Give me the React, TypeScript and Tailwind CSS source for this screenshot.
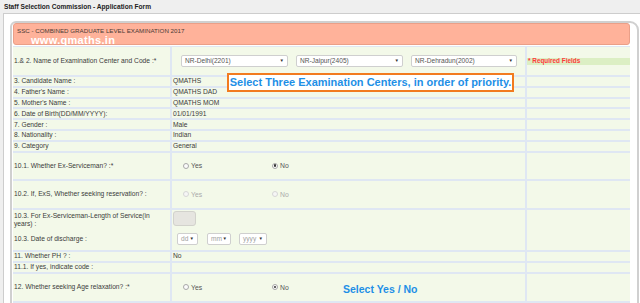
import React from 'react'

const label = "text-[6.7px] leading-[8px] text-[#3b3b3b] px-[1px]"

function Row({ h, left, mid, right, align = 'center' }: { h: string, left: React.ReactNode, mid?: React.ReactNode, right?: React.ReactNode, align?: 'center' | 'start' }) {
    return (
        <div className={`grid grid-cols-[157px_353px_103px] gap-x-[2px] ${h}`}>
            <div className={`bg-[#f3f9e9] flex ${align === 'center' ? 'items-center' : 'items-start pt-[2px]'} ${label}`}>{left}</div>
            <div className={`bg-[#f3f9e9] flex items-center ${label}`}>{mid}</div>
            <div className="bg-[#f3f9e9] flex items-center">{right}</div>
        </div>
    )
}

function Select({ text, w, muted }: { text: string, w: string, muted?: boolean }) {
    return (
        <div className={`${w} h-[12px] bg-white border border-[#cfcfcf] rounded-[2px] flex items-center justify-between px-[3px] text-[6.6px] ${muted ? 'text-[#a0a0a0]' : 'text-[#555]'}`}>
            <span>{text}</span>
            <span className="text-[4.5px] text-[#333]">▼</span>
        </div>
    )
}

function Radio({ text, checked, disabled }: { text: string, checked?: boolean, disabled?: boolean }) {
    return (
        <div className={`flex items-center gap-[2px] text-[6.8px] ${disabled ? 'text-[#aaa]' : 'text-[#555]'}`}>
            <span className={`w-[6px] h-[6px] rounded-full border flex items-center justify-center ${disabled ? 'border-[#d6d6d6] bg-[#f6f6f6]' : 'border-[#a8a8a8] bg-[#fbfbfb]'}`}>
                {checked ? <span className="w-[2.5px] h-[2.5px] rounded-full bg-[#333]" /> : null}
            </span>
            <span className="mt-[1px]">{text}</span>
        </div>
    )
}

function YesNo({ no, disabled }: { no?: boolean, disabled?: boolean }) {
    return (
        <div className="flex items-center pl-[10px]">
            <div className="w-[89px]"><Radio text="Yes" disabled={disabled} /></div>
            <Radio text="No" checked={no} disabled={disabled} />
        </div>
    )
}

export default function App() {
    return (
        <div className="h-[303px] w-[640px] overflow-hidden bg-[#efefef] relative" style={{ fontFamily: '"Liberation Sans", Arial, sans-serif' }}>
            <div className="h-[13px] flex items-center pl-[4px] text-[6.6px] font-semibold text-[#222]">
                Staff Selection Commission - Application Form
            </div>
            <div className="ml-[3px] border-l border-t border-[#cdcdcd] bg-white pl-[6px] pt-[7px] h-[300px]">
                <div className="w-[629px] border-2 border-[#d0d0d0] rounded-tl-[6px] rounded-tr-[9px] pl-[1px] h-[300px]">
                    <div className="w-[617px] h-[22px] bg-[#ffb29a] border border-[#ea9f88] rounded-[3px] pl-[3px] pt-[3px]">
                        <div className="text-[6.2px] leading-[8px] text-[#4a3a35]">SSC - COMBINED GRADUATE LEVEL EXAMINATION 2017</div>
                        <div className="pl-[14px] text-[11px] leading-[10px] font-bold text-white tracking-[0.3px]">www.qmaths.in</div>
                    </div>
                    <div className="w-[617px] flex flex-col gap-y-[2px] bg-[#dfe7f3] pt-[1px] mt-[1px]">
                        <Row h="h-[28px]"
                            left="1.& 2. Name of Examination Center and Code :*"
                            mid={
                                <div className="flex items-center gap-[8px] pl-[8px]">
                                    <Select text="NR-Delhi(2201)" w="w-[107px]" />
                                    <Select text="NR-Jaipur(2405)" w="w-[107px]" />
                                    <Select text="NR-Dehradun(2002)" w="w-[106px]" />
                                </div>
                            }
                            right={
                                <div className="w-full h-[7px] bg-[#dcefc4] flex items-center pl-[1px] text-[6.4px] text-[#ff3a3a] font-semibold">* Required Fields</div>
                            }
                        />
                        <Row h="h-[8.8px]" left="3. Candidate Name :" mid="QMATHS" />
                        <Row h="h-[8.8px]" left="4. Father's Name :" mid="QMATHS DAD" />
                        <Row h="h-[8.8px]" left="5. Mother's Name :" mid="QMATHS MOM" />
                        <Row h="h-[8.8px]" left="6. Date of Birth(DD/MM/YYYY):" mid="01/01/1991" />
                        <Row h="h-[8.8px]" left="7. Gender :" mid="Male" />
                        <Row h="h-[8.8px]" left="8. Nationality :" mid="Indian" />
                        <Row h="h-[8.8px]" left="9. Category" mid="General" />
                        <Row h="h-[26.3px]" left="10.1. Whether Ex-Serviceman? :*" mid={<YesNo no />} />
                        <Row h="h-[26.7px]" left="10.2. If, ExS, Whether seeking reservation? :" mid={<YesNo disabled />} />
                        <Row h="h-[16px]" align="start"
                            left={<span>10.3. For Ex-Serviceman-Length of Service(in<br />years) :</span>}
                            mid={<div className="w-[23px] h-[15px] mt-[1px] self-start bg-[#e6e5e0] border border-[#d2d2cc] rounded-[3px]" />}
                        />
                        <Row h="h-[22.3px]" left="10.3. Date of discharge :"
                            mid={
                                <div className="flex items-center pl-[4px]">
                                    <Select text="dd" w="w-[21px]" muted />
                                    <div className="ml-[9px]"><Select text="mm" w="w-[24px]" muted /></div>
                                    <div className="ml-[8px]"><Select text="yyyy" w="w-[28px]" muted /></div>
                                </div>
                            }
                        />
                        <Row h="h-[8.7px]" left="11. Whether PH ? :" mid="No" />
                        <Row h="h-[9px]" left="11.1. If yes, indicate code :" />
                        <Row h="h-[27px]" left="12. Whether seeking Age relaxation? :*" mid={<YesNo no />} />
                        <Row h="h-[26px]" left="" />
                    </div>
                </div>
            </div>

            <div className="absolute left-[227px] top-[73px] w-[287px] h-[19px] bg-white border-2 border-[#f27b1f] flex items-center justify-center text-[11px] font-bold text-[#1e8fe6]">
                Select Three Examination Centers, in order of priority.
            </div>
            <div className="absolute left-[343px] top-[282px] text-[10.5px] font-bold text-[#1e8fe6]">
                Select Yes / No
            </div>
        </div>
    )
}
